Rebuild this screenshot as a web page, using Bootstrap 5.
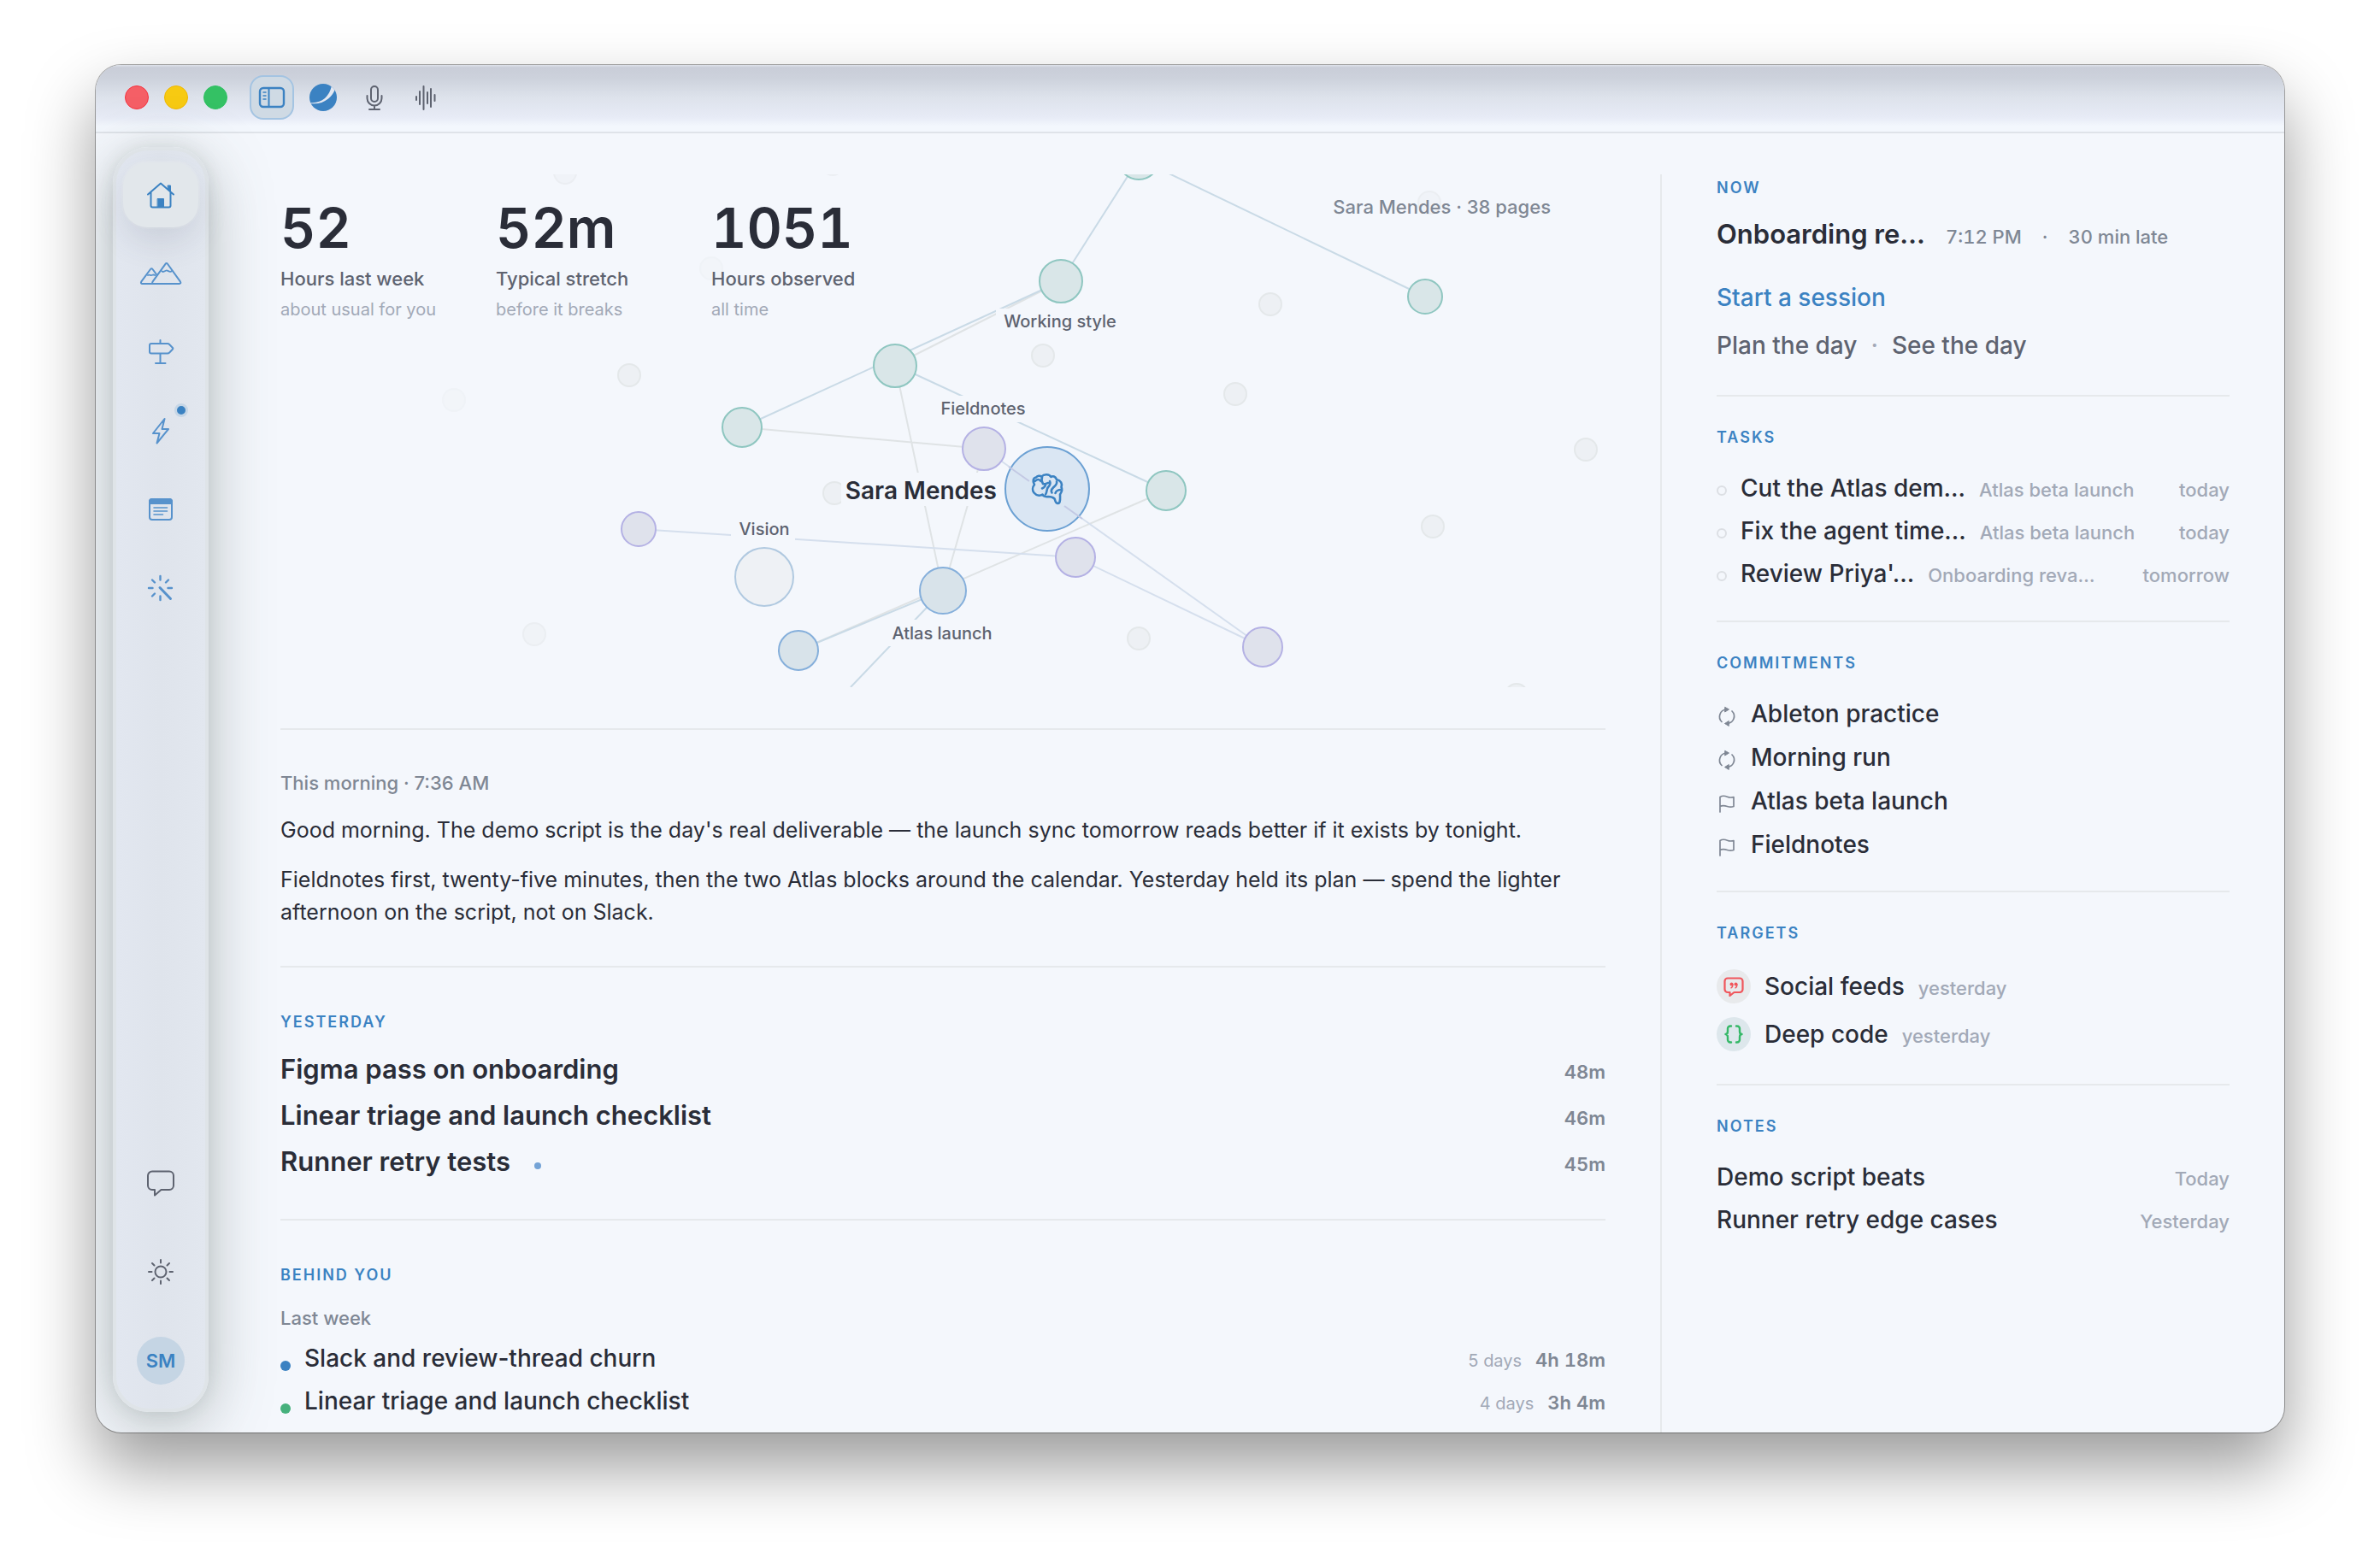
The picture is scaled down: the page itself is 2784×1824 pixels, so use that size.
<!DOCTYPE html>
<html lang="en">
<head>
<meta charset="utf-8">
<meta name="viewport" content="width=device-width, initial-scale=1">
<title>Home</title>
<link href="https://cdn.jsdelivr.net/npm/bootstrap@5.3.0/dist/css/bootstrap.min.css" rel="stylesheet">
<style>
:root{--bg:#f4f7fc;--ink:#2a2d38;--soft:#5e6370;--muted:#7f8794;--faint:#a2a9b7;--blue:#3b82c2;--line:#e6e9ec}
body{font-family:Inter,"Liberation Sans",sans-serif;color:var(--ink);background:#fff;font-size:22px;line-height:28px}
a{text-decoration:none;color:inherit}
.stage{padding:76px 112px 148px}
.app-window{background:var(--bg);border-radius:30px;box-shadow:0 0 0 1px rgba(0,0,0,.32),0 40px 80px rgba(0,0,0,.4)}
.app-clip{border-radius:30px}
.titlebar{height:80px;padding:0 34px 2px;border-bottom:2px solid #dfe3e9;background:linear-gradient(#dfe3ec 0,#c9cdd8 3px,#cdd2dc 20%,#dde2eb 48%,#e7ebf6 78%,#f3f7fd 92%)}
.lights{gap:18px;margin-right:26px}
.light{width:28px;height:28px}
.light-r{background:#f55f66;border:1px solid #f5333f}.light-y{background:#f7ca12;border:1px solid #f0b800}.light-g{background:#34c164;border:1px solid #2fc062}
.tool{width:52px;height:52px;border:2px solid transparent;border-radius:16px;background:none;padding:0;color:var(--soft)}
.tool-on{background:#cfdae4;border-color:#a4c4e2;color:var(--blue)}
.body-row{min-height:0}
.rail{width:112px;margin:16px 0 24px 20px;padding:14px 8px 0;border:4px solid #dfe4e8;border-radius:42px;background:linear-gradient(90deg,#e2e7f0,#dfe4ec 50%,#e2e7ef);box-shadow:0 16px 72px rgba(70,85,80,.36),0 0 20px rgba(70,85,80,.1)}
.rail-btn{width:88px;height:76px;border:0;border-radius:28px;background:none;padding:0;color:#5792cc}
.rail-on{background:#e2e7eb;color:var(--blue);box-shadow:0 16px 36px rgba(70,80,110,.13),0 0 0 2px rgba(232,236,240,.5)}
.rail-foot{padding-bottom:12px}
.rail-foot .rail-btn{height:88px;color:var(--soft)}
.ping{width:16px;height:16px;right:12px;top:6px;background:var(--blue);border:3px solid #c6d6e6}
.avatar{width:56px;height:56px;background:#c5d5e4;color:var(--blue);font-size:22px;font-weight:600}
.main-col{margin-left:84px;padding:48px 64px 0 0}
.side-col{width:730px;padding:0 64px;margin-top:48px;border-left:2px solid var(--line)}
.graph-block{padding-bottom:48px}
.graph{height:600px;overflow:hidden}
.graph svg{width:100%;height:600px;display:block}
.stats{left:0;top:0;padding-top:28px}
.stat{width:252px}
.stat-num{font-size:64px;line-height:70px;font-weight:600;font-variant-numeric:tabular-nums}
.stat-label{font-weight:500;color:var(--soft);margin-top:10px}
.stat-sub{font-size:20px;line-height:28px;color:var(--faint);margin-top:8px}
.graph-note{right:64px;top:24px;font-weight:500;color:var(--muted)}
.section{border-top:2px solid var(--line)}
.main-col .section{padding-top:48px}
.side-col .section{padding-top:32px}
.eyebrow{font-size:18px;line-height:32px;font-weight:600;letter-spacing:2px;color:var(--blue);margin:0}
.brief{padding-bottom:44px}
.brief p{font-size:25px;line-height:38px;margin:20px 0 0}
.brief .stamp{font-size:22px;line-height:28px;margin:0 0 22px;font-weight:500;color:var(--muted)}
.brief .stamp + p{margin-top:0}
.day{padding-bottom:40px}
.day ul{margin-top:12px}
.day li{line-height:54px}
.head{font-size:31px;font-weight:600}
.time{line-height:28px;font-weight:600;color:var(--muted);font-variant-numeric:tabular-nums}
.tiny{width:8px;height:8px;background:#74a3d6;margin:10px 0 0 28px}
.period{margin-top:20px;font-weight:500;color:var(--muted)}
.item{font-size:28px;font-weight:500}
.week{margin-top:8px}
.week li{line-height:50px}
.spot{width:12px;height:12px;margin:18px 16px 0 0}
.faint{line-height:28px;font-weight:500;color:var(--faint)}
.meta{line-height:28px;font-weight:500;color:var(--muted);font-variant-numeric:tabular-nums}
.now{padding-bottom:38px}
.now h3{line-height:40px;margin:0}
.now-title{margin-top:18px}
.links{font-size:28px;line-height:40px;font-weight:500}
.start{margin-top:34px}
.side-col ul{margin-top:18px}
.tasks{padding-bottom:30px}.tasks li{line-height:50px}
.commits{padding-bottom:28px}.commits li{line-height:51px}
.commits .ic{color:var(--muted)}
.targets{padding-bottom:30px}.targets li{line-height:56px}
.notes li{line-height:50px}
.ring{width:12px;height:12px;border:2px solid #dcdfe4;margin:6px 16px 0 0;appearance:none;border-radius:50%;background:none;flex:none}
.chip{width:40px;height:40px}
svg{flex:none}
.ic{fill:none;stroke:currentColor;stroke-linecap:round;stroke-linejoin:round;stroke-width:2}
</style>
<script src="https://cdn.jsdelivr.net/npm/bootstrap@5.3.0/dist/js/bootstrap.bundle.min.js"></script>
</head>
<body>
<div class="stage vh-100 d-flex overflow-hidden">
<div class="app-window flex-grow-1 d-flex">
<div class="app-clip flex-grow-1 d-flex flex-column overflow-hidden">

<header class="titlebar d-flex align-items-center flex-shrink-0">
  <div class="lights d-flex">
    <span class="light light-r rounded-circle"></span><span class="light light-y rounded-circle"></span><span class="light light-g rounded-circle"></span>
  </div>
  <div class="d-flex gap-2">
    <button class="tool tool-on d-flex align-items-center justify-content-center" aria-label="Toggle sidebar"><svg class="ic" width="32" height="28" viewBox="0 0 32 28"><rect x="2" y="3" width="28" height="22" rx="4" stroke-width="2.400"/><path d="M12.500 3v22"/><path stroke-width="1.500" d="M6 8h3M6 12h3M6 16h3"/></svg></button>
    <button class="tool d-flex align-items-center justify-content-center" aria-label="Assistant"><svg width="32" height="32" viewBox="0 0 32 32"><defs><clipPath id="orb"><circle cx="16" cy="16" r="16"/></clipPath></defs><circle cx="16" cy="16" r="16" fill="#3b82c2"/><path clip-path="url(#orb)" d="M0 22c8 .8 13-1 18-5 4-4 6.500-8 8-15l4 4c-2 6-5 9-8 11.500-6 5-13 6.500-22 5.500z" fill="#e3e8f2"/></svg></button>
    <button class="tool d-flex align-items-center justify-content-center" aria-label="Dictate"><svg class="ic" width="24" height="32" viewBox="0 0 24 32"><rect x="8" y="3" width="8" height="18" rx="4"/><path d="M3.500 14v3a8.500 8.500 0 0 0 17 0v-3M12 25.500V30M6 30h12"/></svg></button>
    <button class="tool d-flex align-items-center justify-content-center" aria-label="Audio"><svg class="ic" width="26" height="32" viewBox="0 0 26 32"><path d="M2 15v4M6 9v15M10.500 3v27M15 10v13M19 6v21M23.500 13v7"/></svg></button>
  </div>
</header>

<div class="body-row d-flex flex-grow-1">
  <nav class="rail d-flex flex-column align-items-center justify-content-between flex-shrink-0" aria-label="Main">
    <div class="d-flex flex-column gap-3">
      <button class="rail-btn rail-on d-flex align-items-center justify-content-center" aria-label="Home"><svg class="ic" width="34" height="32" viewBox="0 0 34 32"><path d="M2 15.500 17 2.500 32 15.500M5.500 13v15.500a2 2 0 0 0 2 2h19a2 2 0 0 0 2-2V13"/><path d="M25.500 5h3v7l-3-2.500zM13.500 20.500h7v10h-7z" fill="currentColor" stroke-width="1"/></svg></button>
      <button class="rail-btn d-flex align-items-center justify-content-center" aria-label="Horizon"><svg class="ic" width="50" height="28" viewBox="0 0 50 28"><path d="M17 26H3.500c-1.500 0-2-1-1.300-2.300L13 9c.8-1 1.700-1 2.500 0l4.500 6M16.500 26c-1.300 0-1.700-1-1-2.300L30.500 2.800c.7-1 1.800-1 2.500 0L48 23.700c.8 1.300.2 2.300-1.300 2.300z"/><path stroke-width="1.800" d="M10 16c2-1 3 .5 4.500 0s2-1 4 0M26 11c2 2.500 3.500 0 5.500-.5s4 3 6.500.5"/></svg></button>
      <button class="rail-btn d-flex align-items-center justify-content-center" aria-label="Plans"><svg class="ic" width="32" height="32" viewBox="0 0 32 32"><path d="M15.500 2v4M15.500 17.500V29M10 29h11.500M5 6h19c1 0 1.500.3 2.200 1l3.600 3.700c.6.600.6 1.400 0 2L26.200 16.500c-.7.700-1.200 1-2.200 1H5a2 2 0 0 1-2-2V8a2 2 0 0 1 2-2z"/></svg></button>
      <button class="rail-btn position-relative d-flex align-items-center justify-content-center" aria-label="Activity"><svg class="ic" width="22" height="32" viewBox="0 0 22 32"><path d="M15.500 2 2 19h7.500L6.500 30.500 20 14h-7.500z"/></svg><span class="ping position-absolute rounded-circle"></span></button>
      <button class="rail-btn d-flex align-items-center justify-content-center" aria-label="Notes"><svg class="ic" width="30" height="28" viewBox="0 0 30 28"><rect x="2" y="2" width="26" height="24" rx="3"/><path d="M2 7V5a3 3 0 0 1 3-3h20a3 3 0 0 1 3 3v2z" fill="currentColor"/><path stroke-width="1.600" d="M7 12h15.500M7 16h15.500M7 20h10.500"/></svg></button>
      <button class="rail-btn d-flex align-items-center justify-content-center" aria-label="Automations"><svg class="ic" width="32" height="32" viewBox="0 0 32 32"><path stroke-width="2.400" d="M15.500 2v4.500M15.500 25.500V30M2 16h4.500M24.500 16H29M6 6.500l3 3M25 6.500l-3 3M6 25.500l3-3"/><path stroke-width="3" d="m15 15.500 12.500 13"/></svg></button>
    </div>
    <div class="rail-foot d-flex flex-column gap-3">
      <button class="rail-btn d-flex align-items-center justify-content-center" aria-label="Feedback"><svg class="ic" width="34" height="32" viewBox="0 0 34 32"><path d="M7 2.500h20a5 5 0 0 1 5 5V19a5 5 0 0 1-5 5h-9.500L10 30.500V24H7a5 5 0 0 1-5-5V7.500a5 5 0 0 1 5-5z"/></svg></button>
      <button class="rail-btn d-flex align-items-center justify-content-center" aria-label="Appearance"><svg class="ic" width="32" height="32" viewBox="0 0 32 32"><circle cx="16" cy="16" r="6.500"/><path d="M16 2v3.500M16 26.500V30M2 16h3.500M26.500 16H30M6 6l2.500 2.500M23.500 23.500 26 26M26 6l-2.500 2.500M8.500 23.500 6 26"/></svg></button>
      <button class="rail-btn d-flex align-items-center justify-content-center" aria-label="Account"><span class="avatar rounded-circle d-flex align-items-center justify-content-center">SM</span></button>
    </div>
  </nav>

  <main class="main-col flex-grow-1">
    <div class="graph-block">
    <div class="graph position-relative">
      <svg viewBox="0 0 1550 600" role="img" aria-label="Knowledge graph">
        <g fill="#edf0f4" stroke="#e4e8ea" stroke-width="2">
          <g opacity=".55"><circle cx="333" cy="-2" r="13"/><circle cx="297" cy="538" r="13"/><circle cx="1344" cy="33" r="13"/><circle cx="646" cy="-12" r="13"/></g>
          <g opacity=".25"><circle cx="203" cy="264" r="13"/><circle cx="504" cy="110" r="13"/></g>
          <circle cx="408" cy="235" r="13"/><circle cx="648" cy="373" r="13"/><circle cx="1158" cy="152" r="13"/><circle cx="892" cy="212" r="13"/><circle cx="1117" cy="257" r="13"/><circle cx="1527" cy="322" r="13"/><circle cx="1348" cy="412" r="13"/><circle cx="1004" cy="543" r="13"/><circle cx="1446" cy="609" r="13"/>
        </g>
        <g stroke="#dfe3e5" stroke-width="2">
          <path d="M913 125 719 223M540 296 823 321M719 223 775 487M823 321 775 487M1036 370 606 557"/>
        </g>
        <g stroke="#c9dae6" stroke-width="2">
          <path d="M1004-18 913 125M1004-18 1339 143M540 296 913 125M719 223 1036 370M775 487 606 557M775 487 667 600"/>
        </g>
        <g stroke="#d5dfed" stroke-width="2"><path d="M823 321 1149 553M930 448 1149 553M419 415 930 448"/></g>
        <g fill="#d9e6e8" stroke="#8ec6c0" stroke-width="2">
          <circle cx="1004" cy="-18" r="24"/><circle cx="1339" cy="143" r="20"/><circle cx="913" cy="125" r="25"/><circle cx="719" cy="224" r="25"/><circle cx="540" cy="296" r="23"/><circle cx="1036" cy="370" r="23"/>
        </g>
        <g fill="#dfe2ec" stroke="#b4b1e4" stroke-width="2"><circle cx="823" cy="321" r="25"/><circle cx="930" cy="448" r="23"/><circle cx="1149" cy="553" r="23"/><circle cx="419" cy="415" r="20"/></g>
        <g fill="#d8e3ea" stroke="#85afdb" stroke-width="2"><circle cx="775" cy="487" r="27"/><circle cx="606" cy="557" r="23"/></g>
        <circle cx="566" cy="471" r="34" fill="#eef1f5" stroke="#b0c9e0" stroke-width="2"/>
        <circle cx="897" cy="368" r="49" fill="#dae6f3" stroke="#6ba0d3" stroke-width="2"/>
        <path d="M852 342 876 359M917 388 938 403" stroke="#c3c9e4" stroke-width="2"/>
        <g transform="translate(867 338)" fill="none" stroke="#3b82c2" stroke-width="2.600" stroke-linecap="round" stroke-linejoin="round">
          <path d="M15 25c-2.500 3-2.500 7-.5 9.500 3 3.500 7 4 10 2 1 2.500 4.500 3 6.500 2.500 3 0 5.500.5 7.500 2.500 1 1.500.5 3 2 4.500s3.500 1 4-.5c1-3 .5-6 .5-9 2-3 3-6 1.500-8.500 1.500-4-.5-8-5.500-9-1.500-4-4.500-4.500-6.500-3-2-3.500-8.500-3.500-11-.5-2-1-5-1-6.500 1-3.500.5-4.500 4.500-2 8.500z"/>
          <path d="M15.500 21c2.500-2.500 5-3 7 0M24 16.500c-1 2.500-.5 5 1 7.500 2 1 4-.5 6-1M28 24c.5 3-1 4-4 5.500M33 21c1 2.500 0 5-2 7s-1 6-3 8.500M41 21.500c1 3-2 5-4 7s-3 4-1.500 6M46 31c-3 0-6 1.500-6.500 4"/>
        </g>
        <g fill="#f4f7fc"><rect x="837" y="157" width="150" height="30"/><rect x="763" y="259" width="117" height="31"/><rect x="656" y="349" width="189" height="39"/><rect x="527" y="400" width="75" height="31"/><rect x="706" y="521" width="136" height="31"/></g>
        <g font-family="Inter, Liberation Sans, sans-serif" font-size="20" font-weight="500" fill="#5e6370" text-anchor="middle">
          <text x="912" y="179">Working style</text><text x="822" y="281">Fieldnotes</text><text x="566" y="422">Vision</text><text x="774" y="544">Atlas launch</text>
          <text x="838" y="380" font-size="28" font-weight="600" fill="#2a2d38" text-anchor="end">Sara Mendes</text>
        </g>
      </svg>
      <div class="stats position-absolute d-flex">
        <div class="stat"><div class="stat-num">52</div><div class="stat-label">Hours last week</div><div class="stat-sub">about usual for you</div></div>
        <div class="stat"><div class="stat-num">52m</div><div class="stat-label">Typical stretch</div><div class="stat-sub">before it breaks</div></div>
        <div class="stat"><div class="stat-num">1051</div><div class="stat-label">Hours observed</div><div class="stat-sub">all time</div></div>
      </div>
      <div class="graph-note position-absolute">Sara Mendes · 38 pages</div>
    </div>
    </div>

    <section class="section brief">
      <p class="stamp">This morning · 7:36 AM</p>
      <p>Good morning. The demo script is the day's real deliverable — the launch sync tomorrow reads better if it exists by tonight.</p>
      <p>Fieldnotes first, twenty-five minutes, then the two Atlas blocks around the calendar. Yesterday held its plan — spend the lighter afternoon on the script, not on Slack.</p>
    </section>

    <section class="section day">
      <h2 class="eyebrow">YESTERDAY</h2>
      <ul class="list-unstyled mb-0">
        <li class="d-flex align-items-baseline justify-content-between"><span class="head">Figma pass on onboarding</span><span class="time">48m</span></li>
        <li class="d-flex align-items-baseline justify-content-between"><span class="head">Linear triage and launch checklist</span><span class="time">46m</span></li>
        <li class="d-flex align-items-baseline justify-content-between"><span class="head d-flex align-items-center">Runner retry tests<span class="tiny rounded-circle"></span></span><span class="time">45m</span></li>
      </ul>
    </section>

    <section class="section">
      <h2 class="eyebrow">BEHIND YOU</h2>
      <div class="period">Last week</div>
      <ul class="week list-unstyled mb-0">
        <li class="d-flex align-items-center"><span class="spot rounded-circle" style="background:#3b82c2"></span><span class="d-flex flex-grow-1 align-items-baseline"><span class="item flex-grow-1">Slack and review-thread churn</span><span class="stat-sub m-0 me-3">5 days</span><span class="time">4h 18m</span></span></li>
        <li class="d-flex align-items-center"><span class="spot rounded-circle" style="background:#45b07c"></span><span class="d-flex flex-grow-1 align-items-baseline"><span class="item flex-grow-1">Linear triage and launch checklist</span><span class="stat-sub m-0 me-3">4 days</span><span class="time">3h 4m</span></span></li>
      </ul>
    </section>
  </main>

  <aside class="side-col flex-shrink-0">
    <section class="now">
      <h2 class="eyebrow">NOW</h2>
      <div class="now-title d-flex align-items-baseline"><h3 class="head">Onboarding re…</h3><span class="meta ms-4">7:12 PM</span><span class="meta ms-4">·</span><span class="meta ms-4">30 min late</span></div>
      <div class="links start" style="color:var(--blue)"><a href="#">Start a session</a></div>
      <div class="links mt-3 d-flex" style="color:var(--soft)"><a href="#">Plan the day</a><span class="mx-3" style="color:var(--faint)">·</span><a href="#">See the day</a></div>
    </section>
    <section class="section tasks">
      <h2 class="eyebrow">TASKS</h2>
      <ul class="list-unstyled mb-0">
        <li class="d-flex align-items-center"><input type="checkbox" class="ring" id="t1"><label for="t1" class="d-flex flex-grow-1 align-items-baseline"><span class="item">Cut the Atlas dem…</span><span class="faint ms-3">Atlas beta launch</span><span class="faint ms-auto">today</span></label></li>
        <li class="d-flex align-items-center"><input type="checkbox" class="ring" id="t2"><label for="t2" class="d-flex flex-grow-1 align-items-baseline"><span class="item">Fix the agent time…</span><span class="faint ms-3">Atlas beta launch</span><span class="faint ms-auto">today</span></label></li>
        <li class="d-flex align-items-center"><input type="checkbox" class="ring" id="t3"><label for="t3" class="d-flex flex-grow-1 align-items-baseline"><span class="item">Review Priya'…</span><span class="faint ms-3">Onboarding reva…</span><span class="faint ms-auto">tomorrow</span></label></li>
      </ul>
    </section>
    <svg class="d-none"><defs>
      <g id="cycle" stroke-width="1.700"><path d="M11 4A8.500 8.500 0 0 0 6 18.500M13 20.500A8.500 8.500 0 0 0 18 6"/><path fill="currentColor" stroke-width="1" d="M10 1.500 14.500 4 10 6.800zM14 17.700 9.500 20.500l4.500 2.700z"/></g>
      <g id="flag" stroke-width="1.700"><path d="M4 22V4.500c3-2 5.500-1.500 8.500-.3s5 1 7.500.3v11c-2.500.9-4.500 1-7.500 0S7 14 4 15.500"/></g>
    </defs></svg>
    <section class="section commits">
      <h2 class="eyebrow">COMMITMENTS</h2>
      <ul class="list-unstyled mb-0">
        <li class="d-flex align-items-center item"><svg class="ic mt-1 me-3" width="24" height="24" viewBox="0 0 24 24"><use href="#cycle"/></svg>Ableton practice</li>
        <li class="d-flex align-items-center item"><svg class="ic mt-1 me-3" width="24" height="24" viewBox="0 0 24 24"><use href="#cycle"/></svg>Morning run</li>
        <li class="d-flex align-items-center item"><svg class="ic mt-1 me-3" width="24" height="24" viewBox="0 0 24 24"><use href="#flag"/></svg>Atlas beta launch</li>
        <li class="d-flex align-items-center item"><svg class="ic mt-1 me-3" width="24" height="24" viewBox="0 0 24 24"><use href="#flag"/></svg>Fieldnotes</li>
      </ul>
    </section>
    <section class="section targets">
      <h2 class="eyebrow">TARGETS</h2>
      <ul class="list-unstyled mb-0">
        <li class="d-flex align-items-center"><span class="chip rounded-circle d-flex align-items-center justify-content-center me-3" style="background:#e8eaec;color:#f0565c"><svg class="ic" width="24" height="24" viewBox="0 0 24 24"><path stroke-width="2.200" d="M5 2.500h14a3.500 3.500 0 0 1 3.500 3.500v9.500A3.500 3.500 0 0 1 19 19h-6.500l-5 4v-4H5a3.500 3.500 0 0 1-3.500-3.500V6A3.500 3.500 0 0 1 5 2.500z"/><g fill="currentColor" stroke="none"><circle cx="9.500" cy="9.500" r="2"/><circle cx="14.500" cy="9.500" r="2"/></g><path stroke-width="1.400" d="M11 10c0 2-.7 3-2 3.800M16 10c0 2-.7 3-2 3.800"/></svg></span><span class="item">Social feeds</span><span class="faint ms-3 mt-1">yesterday</span></li>
        <li class="d-flex align-items-center"><span class="chip rounded-circle d-flex align-items-center justify-content-center me-3" style="background:#dde7ec;color:#35b868"><svg class="ic" width="24" height="24" viewBox="0 0 24 24"><path stroke-width="2.400" d="M9 2.500H8A3 3 0 0 0 5 5.500v3C5 10.500 4 12 2.500 12 4 12 5 13.500 5 15.500v3a3 3 0 0 0 3 3h1M15 2.500h1a3 3 0 0 1 3 3v3c0 2 1 3.500 2.500 3.500-1.500 0-2.500 1.500-2.500 3.500v3a3 3 0 0 1-3 3h-1"/></svg></span><span class="item">Deep code</span><span class="faint ms-3 mt-1">yesterday</span></li>
      </ul>
    </section>
    <section class="section notes">
      <h2 class="eyebrow">NOTES</h2>
      <ul class="list-unstyled mb-0">
        <li class="d-flex align-items-baseline justify-content-between"><span class="item">Demo script beats</span><span class="faint">Today</span></li>
        <li class="d-flex align-items-baseline justify-content-between"><span class="item">Runner retry edge cases</span><span class="faint">Yesterday</span></li>
      </ul>
    </section>
  </aside>
</div>
</div>
</div>
</div>
</body>
</html>
